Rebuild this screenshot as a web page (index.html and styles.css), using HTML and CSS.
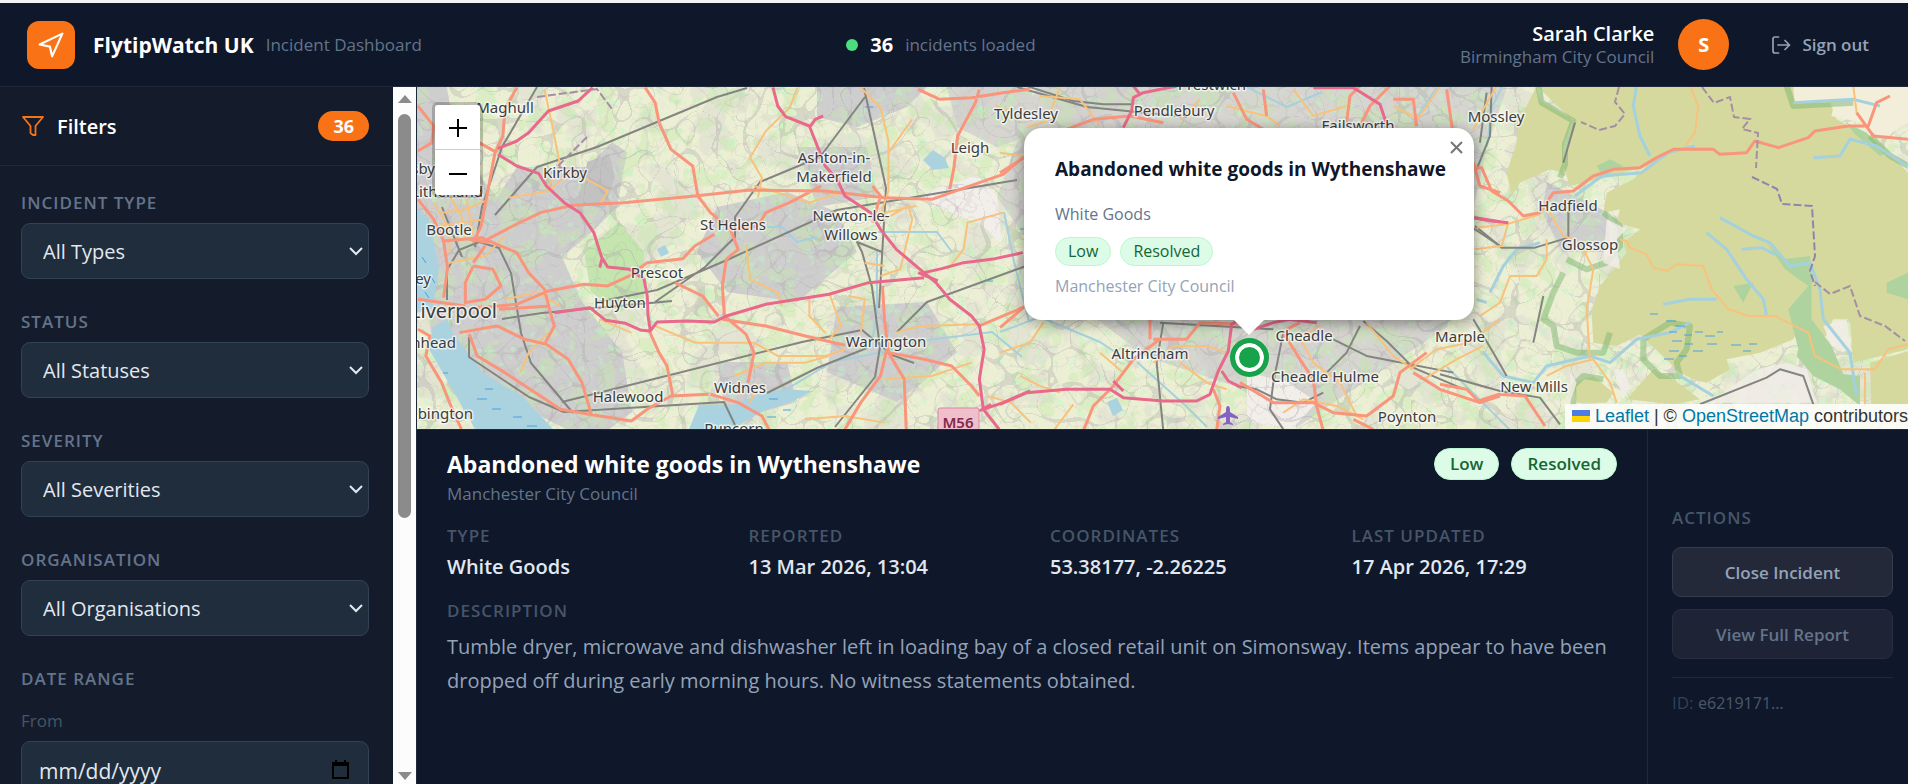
FILE: index.html
```html
<!DOCTYPE html>
<html lang="en">
<head>
<meta charset="utf-8">
<title>FlytipWatch UK</title>
<link rel="stylesheet" href="styles.css">
</head>
<body>
<div class="app">
<header class="topbar">
  <div class="brand">
    <span class="logo"><svg width="26" height="26" viewBox="0 0 24 24" fill="none" stroke="currentColor" stroke-width="2" stroke-linejoin="round" stroke-linecap="round"><path d="M1.500 11.500 L22.500 1.500 L13 22.500 L11 13.500 Z"/></svg></span>
    <span class="brand-name">FlytipWatch UK</span>
    <span class="muted">Incident Dashboard</span>
  </div>
  <div class="counter"><span class="dot"></span><strong>36</strong><span class="muted">incidents loaded</span></div>
  <div class="account">
    <div class="who"><span class="who-name">Sarah Clarke</span><span class="who-org">Birmingham City Council</span></div>
    <span class="avatar">S</span>
    <button class="signout" type="button"><svg width="20" height="20" viewBox="0 0 20 20" fill="none" stroke="currentColor" stroke-width="1.700" stroke-linecap="round" stroke-linejoin="round"><path d="M7.500 2H4a2 2 0 0 0-2 2v12a2 2 0 0 0 2 2h3.500M7 10h11.500M14 5.500l4.500 4.500-4.500 4.500"/></svg>Sign out</button>
  </div>
</header>
<div class="body">
  <aside class="sidebar">
    <div class="filters">
      <div class="filters-head">
        <svg width="22" height="20" viewBox="0 0 22 20" fill="none" stroke="currentColor" stroke-width="1.800" stroke-linejoin="round"><path d="M1 1h20l-7.500 9v9h-2.500l-2.500-2v-7z"/></svg>
        <h2>Filters</h2><span class="badge">36</span>
      </div>
      <form class="fields">
        <div class="field"><label for="type">Incident Type</label><div class="select-wrap"><select id="type"><option>All Types</option></select><svg class="chev" viewBox="0 0 14 9"><path d="M1 1l6 6 6-6"/></svg></div></div>
        <div class="field"><label for="status">Status</label><div class="select-wrap"><select id="status"><option>All Statuses</option></select><svg class="chev" viewBox="0 0 14 9"><path d="M1 1l6 6 6-6"/></svg></div></div>
        <div class="field"><label for="severity">Severity</label><div class="select-wrap"><select id="severity"><option>All Severities</option></select><svg class="chev" viewBox="0 0 14 9"><path d="M1 1l6 6 6-6"/></svg></div></div>
        <div class="field"><label for="org">Organisation</label><div class="select-wrap"><select id="org"><option>All Organisations</option></select><svg class="chev" viewBox="0 0 14 9"><path d="M1 1l6 6 6-6"/></svg></div></div>
        <fieldset class="range"><legend>Date Range</legend>
          <label for="from">From</label>
          <div class="select-wrap"><input id="from" type="text" value="mm/dd/yyyy"><svg class="cal" viewBox="0 0 17 19"><path fill="none" stroke="#000" stroke-width="2" d="M1 3h15v15H1z"/><path d="M0 3h17v3H0zM3 0h2v3H3zM12 0h2v3h-2z"/></svg></div>
        </fieldset>
      </form>
    </div>
    <div class="scrollbar"><span class="up"></span><span class="thumb"></span><span class="down"></span></div>
  </aside>
  <main class="main">
    <section class="map">
      <svg class="tiles" viewBox="0 0 1491 342" preserveAspectRatio="xMinYMin slice">
        <defs>
          <filter id="woods" x="0" y="0" width="100%" height="100%"><feTurbulence type="fractalNoise" baseFrequency=".05" numOctaves="4" seed="4"/><feColorMatrix values="0 0 0 0 .55  0 0 0 0 .82  0 0 0 0 .4  12 0 0 0 -6.400"/></filter>
          <filter id="parks" x="0" y="0" width="100%" height="100%"><feTurbulence type="fractalNoise" baseFrequency=".1" numOctaves="2" seed="21"/><feColorMatrix values="0 0 0 0 .5  0 0 0 0 .95  0 0 0 0 .55  12 0 0 0 -7.600"/></filter>
          <filter id="towns" x="0" y="0" width="100%" height="100%"><feTurbulence type="fractalNoise" baseFrequency=".022" numOctaves="4" seed="9"/><feColorMatrix values="0 0 0 0 .61  0 0 0 0 .6  0 0 0 0 .6  0 14 0 0 -7.400"/></filter>
          <filter id="lanes" x="0" y="0" width="100%" height="100%"><feTurbulence type="turbulence" baseFrequency=".03" numOctaves="1" seed="7"/><feColorMatrix values="0 0 0 0 .38  0 0 0 0 .35  0 0 0 0 .38  -40 0 0 0 .9"/></filter>
          <filter id="lanes2" x="0" y="0" width="100%" height="100%"><feTurbulence type="turbulence" baseFrequency=".05" numOctaves="1" seed="33"/><feColorMatrix values="0 0 0 0 .42  0 0 0 0 .39  0 0 0 0 .42  -26 0 0 0 .7"/></filter>
        </defs>
        <rect width="1491" height="342" fill="#edefd5"/>
        <g fill="#cfcece">
          <path d="M0 0h30l10 60 40 50 20-30 70 0 25-25 15 10-10 55-25 25-30 25 20 45 40 50 10 60-40 30-60-30-50-40-50-30-10-90-10-60z"/>
          <path d="M300 120l70-15 50 20 20 40-60 50-70-10-30-40zM380 60l70 0 10 50-60 10zM300 275l70 0 10 40-70 20zM420 220l90-5 30 50-60 50-70-30zM400 0h110l-20 20-50 20-40-10z"/>
          <path d="M530 0h80l30 40-60 20-40-20zM620 0h470l-20 60-40 180-90 60-60 40-60-40-90-30-80-60-70-100z" opacity=".8"/>
          <path d="M1130 95l60 30 5 40-50 0-20-40z"/>
        </g>
        <rect width="1491" height="342" filter="url(#towns)" opacity=".3"/>
        <rect width="1491" height="342" filter="url(#woods)" opacity=".4"/>
        <rect width="1491" height="342" filter="url(#parks)" opacity=".4"/>
        <path d="M167 165l35-30 25 30 0 50-25 10-28-20z" fill="#c4e5ae"/>
        <path d="M170 75l22-8 6 22-10 32-22-4z" fill="#c2c2c2"/>
        <path d="M500 110l60-22 20 20 5 50-20-20-25-10zM830 285l40 10 30 20-25 27-45-8z" fill="#f2eeea"/>
        <rect width="1491" height="342" filter="url(#lanes)" opacity=".32"/>
        <rect width="1491" height="342" filter="url(#lanes2)" opacity=".22"/>
        <g class="water">
          <path d="M0 122l12 10 10 50-6 38-16 6z"/>
          <path d="M16 240l14-8 6 14 30 40 40 24 30 32H58L34 300 12 262z"/>
          <path d="M272 342l10-24 34 0 20-8 30-8 30 2-20 10-30 10-30 18z"/>
          <path d="M506 73l10-10 12 8 4 10-16 2zM690 315l10-4 6 12-10 6zM240 162l8-4 4 8-8 4z"/>
        </g>
        <g transform="matrix(.3333 0 0 .3333 1023 -1)">
          <path fill="#d5d99e" d="M290 0L300 45 400 100 370 180 370 260 330 250 240 290 215 330 200 260 230 170 235 110 265 50zM400 105L370 240 390 300 520 270 620 240 580 280 500 320 490 380 540 370 530 410 600 430 550 470 560 500 480 600 455 680 460 770 530 780 600 745 720 860 760 880 800 890 870 850 860 820 960 800 1060 760 1080 720 1140 780 1180 700 1230 700 1240 830 1404 790V260L1320 170 1190 100 1150 0 290 0zM560 940L640 850 700 880 780 940 700 955zM400 890l60-20 60 50-20 30-90 0zM1290 830l114-35v160h-110z"/>
          <path fill="#f2eeda" d="M1060 0h344v110l-80 50-60-50-90-20 10-40-120 0z"/>
          <path fill="#aed39f" d="M470 240l40-20 40 20-60 30zM1220 110l60 30 60 60 -20 10 -80-70zM980 470l50 50 80-10 5 60 0 130 60 80 50 120-60-10-90-100-30-120 60-70-70-50zM880 600l60-10-30 60zM1340 590l64-30v80l-64-20zM1080 770l40 60 60 30 80 10 0 90-60-50-80-40-50-60z"/>
          <path class="park-edge" d="M295 0l10 50 95 55-25 70 0 60-15 40 M490 380l50 40 0 60-40 50-60 20-60-30M370 560l-30 60-30 80 30 20 10 60 60 20 80 0 20-60M400 960l0-60 30-30 60 10M720 870l-60 0-50-50 0-60 80-50 60 10-10 70-30 40zM1040 0l20 60 180-10M1290 150l60 60 54 30"/>
          <path fill="#f2eeea" opacity=".8" d="M500 400l60 30-30 30 10 90-50-20zM390 860l20 30-20 60zM520 850l30 0 20 50-20 40zM780 950l70-30 100-70 90-20 60 20 30 100zM1150 720l70-20 15 100-60-20z"/>
        </g>
        <g class="stream" transform="matrix(.3333 0 0 .3333 1023 -1)">
          <path d="M590 0l-10 60 20 90 30 60M405 330l80-60 120-10 80-60 80-20M840 395l100 55 50 20 60 70 60-10 30 80 10 90 80 100 20 130M800 440l60 50 60 90 50 60 10 50M905 490l60-5 40 20M670 655l80-15 80 0M150 620l40-80 40-50 70-20M110 640l30 10M130 800l60 70 90 20 40-50 130-30 60 20 80-70 100-20 60-30M720 870l100 60M1060 50l180-10 80 20M1120 215l80-5 30-50 80 20 90 60"/>
        </g>
        <g class="stream thin">
          <path d="M460 145l60 0 15 20M325 140l40 0 15 15 20-5M455 255l5-30 0-60M365 305l50-30 50-10 30-10 80-10 30 25M587 125l10 50 15 60M583 245l40-15 60 25 30 20M720 275l50 45 20 20M830 0l40 20 35-15M1030 280l30 30 40 40M1000 30l20-30M1070 60l5-40 10-20"/>
        </g>
        <g class="rail">
          <path d="M120 0L85 60 65 120 58 160M78 128L120 80 180 60 300 10 330 1M447 1l22 100-7 120M448 10l-45 60-60 25-25 35 0 20-30 30-50 35M180 215l60-12 70-30 110-50 180-30M30 213l0-30 12-20 20-8 20 6 12 25 10 60 10 30 42 50M85 232l40-6 130-12M52 250l0 20 60 40 35 15 160-10 12 25M145 315l240-60 60-12 30 25 22 8M350 306l50-25 50-20M465 165l-25-10 5 10 10 35 8 60-5 30-40 50M25 120l20 50M480 245l30-30 110-40M600 0l70 20 100 10"/>
          <path transform="matrix(.3333 0 0 .3333 583 -1)" d="M80 0l140 45 90 10 90 0M480 710l340 20M490 710l-20 120 20 205M850 740l-30 150-10 80 40 60M710 900l60 10 60 30 80 10 60-30M980 860l60-60 40-80M1090 705l70 60 80 80 140 60M1000 760l100 50 260 50M1500 480l-90-60M1460 20l-20 150"/>
          <path transform="matrix(.3333 0 0 .3333 1023 -1)" d="M155 0l-5 150-40 100M105 420l80 65 100 0 100-30 0-80M370 230l35-120M100 700l60 100 40 70M0 865l180 50 120 20 60 80M780 955l200-80 40-25 70 20 30 85M280 770l30-140"/>
        </g>
        <g class="b-road">
          <g transform="matrix(.3954 0 0 .3333 -7 -1)"><path d="M340 10L360 120 380 240 350 300M250 335l100-20 60-60 90 60-20 40M980 5l-20 60-60 70-40 80 30 60-10 60M1140 5l50 60 20 100 0 150-20 70M1210 200l60-100M1200 400l60-40 10 40-20 100-10 50-50 20M870 300l60 20 80 30 80-30M850 480l10 100 70 40 10 40M620 720l100 50 150 0 60 40 120 0 50-20M560 740l-80-40M820 870l80-40 100 0 60-20M880 890l-20 60M1200 380l80-20M1010 640l0 50 40 50M1060 620l30 100-30 40M1110 630l40 10-10 100M1230 740l60-20 150-5M1150 530l50 10M1480 60l40 20M1500 380l-90 30-10 80-40 60M280 860l20-60 50-60M240 640l80-20 60 40M80 380l60-10 60-30M70 420l120-20M100 330l30 60 10 70M140 320l20 130M1200 880l120-10 100-40M1460 930l60 20 50 60M60 350l40 80 0 70M100 530l90-20 50-60M1370 1035l20-60M1000 1000l100-10 100 20"/></g>
          <g transform="matrix(.3333 0 0 .3333 583 -1)"><path d="M180 5l-40 100-60 20M120 30l120 10 60 80M540 100l60-60M680 60l120 30 40 30M880 10l60 80 100-30M1180 60l80 40M1320 0l-80 120M0 200l70 10M130 710l-40 60-90 30M180 920l-60-20-60-30M300 800l70 60M460 830l60-50 100 0 60 20M540 830l80 60 60 20M960 720l-50 30M890 740l50 90 80 60 50 100M1100 710l80 100 60 40M1230 850l80-60 100-20 90-70M850 980l60-40 100 20 80 40M1270 880l100-60 80-40M160 1035l60-80"/></g>
          <g transform="matrix(.3333 0 0 .3333 1023 -1)"><path d="M170 0l-40 70-30 60M750 0l25 60-10 80-30 40M105 490l80-10 20-70M110 425l90-10 100-30M330 380l40 70 30 10M430 490l30 60-20 120 10 150M120 690l60-40 30-80 80 0 30-50 0-60M430 500l30-10M540 460l20 5 10 20 50 20 20 40 40 10 30-20 80 5 25 70 50 60 60 20 80 0 100 50 20 70 80 40 100 0 40-60 80-20M320 870l60-30 80-20 50 70 20 60M1275 860l0 100M1240 0l10 80"/></g>
        </g>
        <g class="a-road">
          <g transform="matrix(.3954 0 0 .3333 -7 -1)"><path d="M412 358L540 350 720 330 860 312 1050 315 1200 335 1320 340 1440 290 1500 265 1550 215M180 470L260 420 330 380 412 358M595 5l25 45 10 60 30 80 55 50 13 90 32 50 50 50 20 60-30 30-10 80 5 90M770 445l-50 35-30 38-90 12-45 40-55 30-60-5-90 20-80 40-100 10M795 690l55 55 20 55-15 90M790 700l110 20 100 30 100 28M670 590l70 40 40 60M605 735l25 65 20 40 15 90M1440 10l-10 40-45 100-10 100-10 60M270 5l-30 65-5 80-20 50-35 220-20 50M20 60l40 60-5 50-35 25M20 340l40 60 25 65 95-10 90 45 30 60 40 50 15 70 10 40-25 55M85 465l10 80-10 90M125 740l95-20 70 40 55 15 55 45 35 70 25 100M150 745l20 65 70 50 90 70 50 40 100 20 80 15 40-35 60-40 95-5M760 925l70 25 60 40 20 45M1195 600l5 100 10 100 40 80 5 150M1210 800l90 20 70 20 50 60 20 30M1285 10l55 30 80-5 80-15 68-10M1440 720l60-30 68-35M1210 770l-20 100-50 80-40 80M220 200l-60-40M160 540l50 10 20 50-40 40-50 10 0-60 20-50M190 480l-30 50M225 670l130-10M150 460l50 10M20 640l120 20M20 730l30 20-10 60 40 80 20 60 30 80M1170 300l20 30-20 80M1040 300l-80 50-60 30-20 40-60 10"/></g>
          <g transform="matrix(.3333 0 0 .3333 583 -1)"><path d="M200 130l80-30 110-10 100 20M700 20l40 80 50 30M790 10l10 80M1040 110l10-80 30-30M1170 0l-60 60-30 60M1180 40l60 0 10 80M0 260l80-50M0 725l70-60M450 700l0 60M720 715l-120-5-40 50-100 0M480 760l-80 60-60 80-60 60-30 75M640 910l20 50-10 75M850 740l50 80 40 60 10 80 20 75M720 890l100 60 120 0 60 30 100 10 80-60 20-70 80-60M1240 860l80 50 120 40 60-20M900 710l-40 20M1060 1000l60 30M1420 230l20 70 60 20"/></g>
          <g transform="matrix(.3333 0 0 .3333 1023 -1)"><path d="M105 245l20 0 30 70 50 30 45 45 50-10 40-60 60-5 60-45 60-20 80-5 50-30 50-25 120 0 20 15 80-5 25-35 70 20 90-30 20-20 100-15 60 0 25-70 40-20M1250 80l50 70 104 10M0 895l80 15 35 35 60-20 80 5 60 90M20 10l20 140"/></g>
        </g>
        <g class="motorway">
          <g transform="matrix(.3954 0 0 .3333 -7 -1)"><path d="M462 5L425 45 350 75 300 140 270 165 222 188M222 205l48 35 55 22 20 38 45 50 40 30 35 60 20 75 15 28 55 7 37 30 8 50 2 60 6 45M365 680l90-15 40 38 50 9 40 21 23 2 17-27 75-3 70 3 30-18 100-35 80-15 80-15 100-35 140-15M1300 560l45-12 55-18 80-12 70-18M918 5l12 55 20 32 60 28 20 60 20 60 30 40 20 50 65 50 25 50 40 60 60 60 40 40 35 50 55 50 20 30 12 70-12 90 10 90 40 60M1010 125l15-25 20-10M1450 970l50-20 68-35"/><path d="M485 520l-5 25M1285 560l50 25M1440 975l30-20"/></g>
          <g transform="matrix(.3333 0 0 .3333 583 -1)"><path d="M370 125l25-50 5-40 30-15 100-20M400 0l20 25M940 5l120 0 80 50 20 60M0 955l80-35 120-10 130 0 40 25 120 10 100 0 40-20 25-70 30-60 10-80 50-30M665 855l20 30 40 20M1425 395l75 12M760 730l60-20 50-10 80 10M340 885l30 30"/></g>
          <path transform="matrix(.3333 0 0 .3333 1023 -1)" d="M100 395l55 10 50 5"/>
        </g>
        <g class="boundary"><path d="M120 10l60-8 15 20M170 50l-30 30 30 5M1202 0l-4 15 10 12-10 12-16 4-18-8M1285 0l12 16 16-6 4 20 16 2-8 10 16 4-2 35"/><path stroke="#8f86ad" d="M1335 90l25 12 5 15 30 2 3 50-5 15 5 15"/><path d="M1398 195l15 12 20-8 10 30 25 10 20 15"/></g>
        <g class="marsh"><path d="M1233 227h8M1249 234h10M1258 239h10M1252 245h8M1278 245h8M1267 248h8M1288 249h10M1300 245h6M1255 254h10M1268 257h8M1290 257h10M1314 258h10M1332 257h8M1252 264h10M1276 264h10M1326 264h8M1262 269h8M1247 272h10M26 286h5M68 302h8M60 312h10M75 322h9M96 330h9M110 339h10M352 312h9M366 323h8M350 330h9M5 170l4 6M14 190l4 6M8 205l4 6M603 142h6M570 194h6M448 20l8 0"/></g>
        <g class="plane"><path d="M811 319c2 0 2 3 2 6l8 5v2l-8-2v5l3 2v1l-5-1-5 1v-1l3-2v-5l-8 2v-2l8-5c0-3 0-6 2-6z"/></g>
        <g class="shield"><rect x="521" y="321" width="41" height="26" rx="2"/><text x="541" y="341">M56</text></g>
        <g class="places">
          <text x="88" y="26">Maghull</text><text x="148" y="91">Kirkby</text><text x="32" y="148">Bootle</text>
          <text class="end" x="66" y="110">Litherland</text><text class="end" x="18" y="87">Crosby</text><text class="end" x="14" y="197">Wallasey</text>
          <text class="end city" x="80" y="231">Liverpool</text><text class="end" x="39" y="261">Birkenhead</text><text class="end" x="56" y="332">Bebington</text>
          <text x="240" y="191">Prescot</text><text x="203" y="221">Huyton</text><text x="211" y="315">Halewood</text><text x="316" y="143">St Helens</text>
          <text x="417" y="76">Ashton-in-</text><text x="417" y="95">Makerfield</text><text x="434" y="134">Newton-le-</text><text x="434" y="153">Willows</text>
          <text x="469" y="260">Warrington</text><text x="323" y="306">Widnes</text><text x="317" y="347">Runcorn</text><text x="553" y="66">Leigh</text>
          <text class="end" x="641" y="32">Tyldesley</text><text x="757" y="29">Pendlebury</text><text class="end" x="829" y="3">Prestwich</text><text x="941" y="44">Failsworth</text>
          <text x="733" y="272">Altrincham</text><text x="887" y="254">Cheadle</text><text x="908" y="295">Cheadle Hulme</text><text x="1043" y="255">Marple</text><text x="990" y="335">Poynton</text>
          <text x="1079" y="35">Mossley</text><text x="1151" y="124">Hadfield</text><text x="1173" y="163">Glossop</text><text x="1117" y="305">New Mills</text>
        </g>
      </svg>
      <div class="zoom"><button type="button" aria-label="Zoom in"><svg viewBox="0 0 18 18"><path d="M0 9h18M9 0v18"/></svg></button><button type="button" aria-label="Zoom out"><svg viewBox="0 0 18 18"><path d="M0 9h18"/></svg></button></div>
      <span class="marker"></span>
      <article class="popup">
        <button class="close" type="button" aria-label="Close"><svg viewBox="0 0 13 13"><path d="M1 1l11 11M12 1L1 12"/></svg></button>
        <h3>Abandoned white goods in Wythenshawe</h3>
        <p class="kind">White Goods</p>
        <div class="tags small"><span>Low</span><span>Resolved</span></div>
        <p class="owner">Manchester City Council</p>
      </article>
      <div class="attribution"><svg width="18" height="12" viewBox="0 0 18 12"><path fill="#4c7be1" d="M0 0h18v6H0z"/><path fill="#ffd500" d="M0 6h18v6H0z"/></svg> <a href="#leaflet">Leaflet</a> | © <a href="#osm">OpenStreetMap</a> contributors</div>
    </section>
    <section class="detail">
      <div class="info">
        <div class="info-head"><h1>Abandoned white goods in Wythenshawe</h1><div class="tags"><span>Low</span><span>Resolved</span></div></div>
        <p class="sub">Manchester City Council</p>
        <dl class="facts">
          <div><dt>Type</dt><dd>White Goods</dd></div>
          <div><dt>Reported</dt><dd>13 Mar 2026, 13:04</dd></div>
          <div><dt>Coordinates</dt><dd>53.38177, -2.26225</dd></div>
          <div><dt>Last Updated</dt><dd>17 Apr 2026, 17:29</dd></div>
        </dl>
        <h4>Description</h4>
        <p class="desc">Tumble dryer, microwave and dishwasher left in loading bay of a closed retail unit on Simonsway. Items appear to have been dropped off during early morning hours. No witness statements obtained.</p>
      </div>
      <aside class="actions">
        <h4>Actions</h4>
        <button type="button">Close Incident</button>
        <button type="button" class="dim">View Full Report</button>
        <p class="ident">ID: <code>e6219171…</code></p>
      </aside>
    </section>
  </main>
</div>
</div>
</body>
</html>
```

FILE: styles.css
```css
* { box-sizing: border-box; }
body { margin: 0; background: #0f172a; font-family: "Segoe UI", "Open Sans", sans-serif; color: #fff; }
h1, h2, h3, h4, p, dl, dd { margin: 0; }
button, select, input { font: inherit; color: inherit; }
button { cursor: pointer; }

.app { height: 100vh; display: flex; flex-direction: column; border-top: 3px solid #f1f3f5; overflow: hidden; }

.topbar { flex: none; height: 84px; display: flex; justify-content: space-between; align-items: center; padding: 0 24px 0 27px; border-bottom: 1px solid #1e293b; }
.brand { display: flex; align-items: center; gap: 12px; }
.logo { width: 48px; height: 48px; margin-right: 6px; border-radius: 12px; background: #f97316; display: grid; place-items: center; }
.brand-name { font-size: 21px; font-weight: 700; }
.muted { font-size: 17px; color: #64748b; }
.counter { display: flex; align-items: center; gap: 12px; }
.counter strong { font-size: 20px; font-weight: 700; }
.dot { width: 12px; height: 12px; border-radius: 50%; background: #4ade80; }
.account { display: flex; align-items: center; }
.who { display: flex; flex-direction: column; text-align: right; }
.who-name { font-size: 20px; line-height: 24px; font-weight: 600; }
.who-org { font-size: 17px; line-height: 22px; color: #64748b; }
.avatar { width: 51px; height: 51px; margin: 0 24px; border-radius: 50%; background: #f97316; display: grid; place-items: center; font-size: 20px; font-weight: 700; }
.signout { display: flex; align-items: center; gap: 11px; padding: 8px 15px 8px 18px; border: 0; background: none; color: #94a3b8; font-size: 17px; font-weight: 600; }

.body { flex: 1; min-height: 0; display: flex; }
.sidebar { flex: none; width: 417px; display: flex; background: #141c2b; border-right: 1px solid #1e293b; }
.filters { flex: 1; min-width: 0; overflow: hidden; }
.filters-head { height: 79px; display: flex; align-items: center; gap: 13px; padding: 0 24px 0 22px; border-bottom: 1px solid #1e293b; color: #f97316; }
.filters-head h2 { flex: 1; font-size: 20px; font-weight: 600; color: #fff; }
.badge { padding: 0 15px; border-radius: 15px; background: #f97316; color: #fff; font-size: 18px; line-height: 30px; font-weight: 700; }
.fields { display: flex; flex-direction: column; gap: 31px; padding: 25px 24px 0 21px; }
.field { display: flex; flex-direction: column; gap: 8px; }
.field label, .range legend, dt, h4 { font-size: 17px; line-height: 24px; font-weight: 600; letter-spacing: 1px; text-transform: uppercase; color: #64748b; }
.select-wrap { position: relative; display: grid; }
.select-wrap select, .select-wrap input { appearance: none; width: 100%; height: 56px; padding: 0 21px; border: 1px solid #334155; border-radius: 9px; background: #1f2d3d; color: #e2e8f0; font-size: 20px; }
.select-wrap input { height: 60px; padding: 0 17px; font-size: 21px; }
.chev { position: absolute; right: 6px; top: 24px; width: 14px; height: 9px; fill: none; stroke: #e2e8f0; stroke-width: 2; }
.cal { position: absolute; right: 20px; top: 19px; width: 17px; height: 19px; }
.range { margin: 0; padding: 0; border: 0; }
.range legend { padding: 0; }
.range label { display: block; margin: 18px 0 8px; font-size: 17px; line-height: 24px; color: #475569; }
.scrollbar { flex: none; width: 23px; display: flex; flex-direction: column; align-items: center; padding: 8px 0 4px; background: #fcfcfc; }
.up, .down { border: solid transparent; border-width: 0 7px 8px; border-bottom-color: #8b8b8b; }
.down { margin-top: auto; border-width: 8px 7px 0; border-top-color: #8b8b8b; }
.thumb { width: 13px; height: 59%; margin-top: 11px; border-radius: 7px; background: #8b8b8b; }

.main { flex: 1; min-width: 0; display: flex; flex-direction: column; }
.map { position: relative; flex: 1; min-height: 0; overflow: hidden; background: #edefd5; }
.tiles { display: block; width: 100%; height: 100%; }
.tiles path { vector-effect: non-scaling-stroke; }
.water { fill: #aad3df; }
.stream { fill: none; stroke: #a5d0dd; stroke-width: 3; stroke-linejoin: round; }
.thin { stroke-width: 2; }
.park-edge { fill: none; stroke: #7eb56f; stroke-opacity: .5; stroke-width: 6; stroke-linejoin: round; }
.rail { fill: none; stroke: #848480; stroke-width: 2; stroke-linejoin: round; }
.b-road { fill: none; stroke: #f8c27c; stroke-width: 2; stroke-linejoin: round; }
.a-road { fill: none; stroke: #f9957b; stroke-width: 3; stroke-linejoin: round; }
.motorway { fill: none; stroke: #e8698a; stroke-width: 3; stroke-linejoin: round; }
.boundary { fill: none; stroke: #a58fa5; stroke-width: 2; stroke-dasharray: 8 3; }
.marsh { fill: none; stroke: #4f9fe0; stroke-width: 1; }
.plane { fill: #8461c4; }
.shield rect { fill: #efc0cc; stroke: #d78a9e; }
.shield text { font: 600 15px "Noto Sans", sans-serif; fill: #82294b; text-anchor: middle; }
.places { font: 15px "Noto Sans", sans-serif; fill: #3d3d3d; text-anchor: middle; paint-order: stroke; stroke: #fff; stroke-opacity: .65; stroke-width: 3px; stroke-linejoin: round; }
.end { text-anchor: end; }
.city { font-size: 20px; }

.zoom { position: absolute; left: 15px; top: 15px; border: 3px solid rgba(0, 0, 0, .2); border-radius: 6px; background-clip: padding-box; display: flex; flex-direction: column; }
.zoom button { width: 45px; height: 45px; padding: 2px 0 0; border: 0; background: #fff; display: grid; place-items: center; border-radius: 0 0 3px 3px; }
.zoom button:first-child { border-bottom: 1px solid #ccc; border-radius: 3px 3px 0 0; }
.zoom svg { width: 18px; height: 18px; stroke: #000; stroke-width: 2; }
.marker { position: absolute; left: 813px; top: 251px; width: 39px; height: 39px; border-radius: 50%; border: 5px solid #16a34a; background: #16a34a; box-shadow: inset 0 0 0 4px #fff; }
.popup { position: absolute; left: 607px; top: 41px; width: 450px; padding: 26px 24px 22px 31px; border-radius: 18px; background: #fff; color: #0f172a; box-shadow: 0 3px 14px rgba(0, 0, 0, .4); white-space: nowrap; }
.popup::after { content: ""; position: absolute; left: 50%; top: 100%; margin-left: -15px; border: solid transparent; border-width: 15px 15px 0; border-top-color: #fff; }
.popup h3 { font-size: 19px; line-height: 30px; font-weight: 700; }
.kind, .owner { font-size: 16px; line-height: 24px; color: #64748b; }
.kind { margin: 18px 0 11px; }
.owner { margin-top: 8px; color: #94a3b8; }
.close { position: absolute; right: 9px; top: 10px; width: 18px; height: 18px; padding: 0; border: 0; background: none; display: grid; place-items: center; }
.close svg { width: 13px; height: 13px; stroke: #757575; stroke-width: 2; }
.tags { display: flex; align-items: center; gap: 12px; }
.tags span { padding: 0 15px; border: 1px solid #bbf7d0; border-radius: 16px; background: #dcfce7; color: #166534; font-size: 17px; line-height: 30px; font-weight: 600; }
.tags.small { gap: 9px; }
.tags.small span { padding: 0 12px; font-size: 16px; line-height: 27px; font-weight: 500; }
.attribution { position: absolute; right: 0; bottom: 0; padding: 0 0 0 7px; background: rgba(255, 255, 255, .8); font: 18px/25px "Liberation Sans", Arial, sans-serif; color: #333; white-space: nowrap; }
.attribution a { color: #0078a8; text-decoration: none; }

.detail { flex: none; height: 51%; display: flex; border-top: 1px solid #1e293b; }
.info { flex: 1; min-width: 0; padding: 18px 30px; }
.info-head { display: flex; justify-content: space-between; }
.info-head h1 { font-size: 23px; line-height: 32px; font-weight: 700; }
.sub { margin-top: 2px; font-size: 17px; line-height: 24px; color: #64748b; }
.facts { display: grid; grid-template-columns: repeat(4, 1fr); gap: 36px; margin: 18px 0; }
dt, h4, .actions h4 { color: #475569; }
dd { margin-top: 5px; font-size: 20px; line-height: 28px; font-weight: 600; color: #e2e8f0; }
.desc { margin-top: 7px; font-size: 20px; line-height: 34px; color: #94a3b8; }
.actions { flex: none; width: 261px; display: flex; flex-direction: column; justify-content: center; gap: 12px; padding: 8px 15px 0 24px; border-left: 1px solid #1e293b; }
.actions h4 { margin-bottom: 5px; }
.actions button { height: 50px; border: 1px solid #363c4d; border-radius: 9px; background: #24293a; color: #94a3b8; font-size: 17px; font-weight: 600; }
.actions .dim { border-color: #292f40; background: #1e2436; color: #64748b; }
.ident { margin-top: 6px; padding-top: 13px; border-top: 1px solid #1e293b; font-size: 17px; line-height: 24px; color: #334155; }
.ident code { font: 16px "Noto Sans", sans-serif; color: #475569; }
```
